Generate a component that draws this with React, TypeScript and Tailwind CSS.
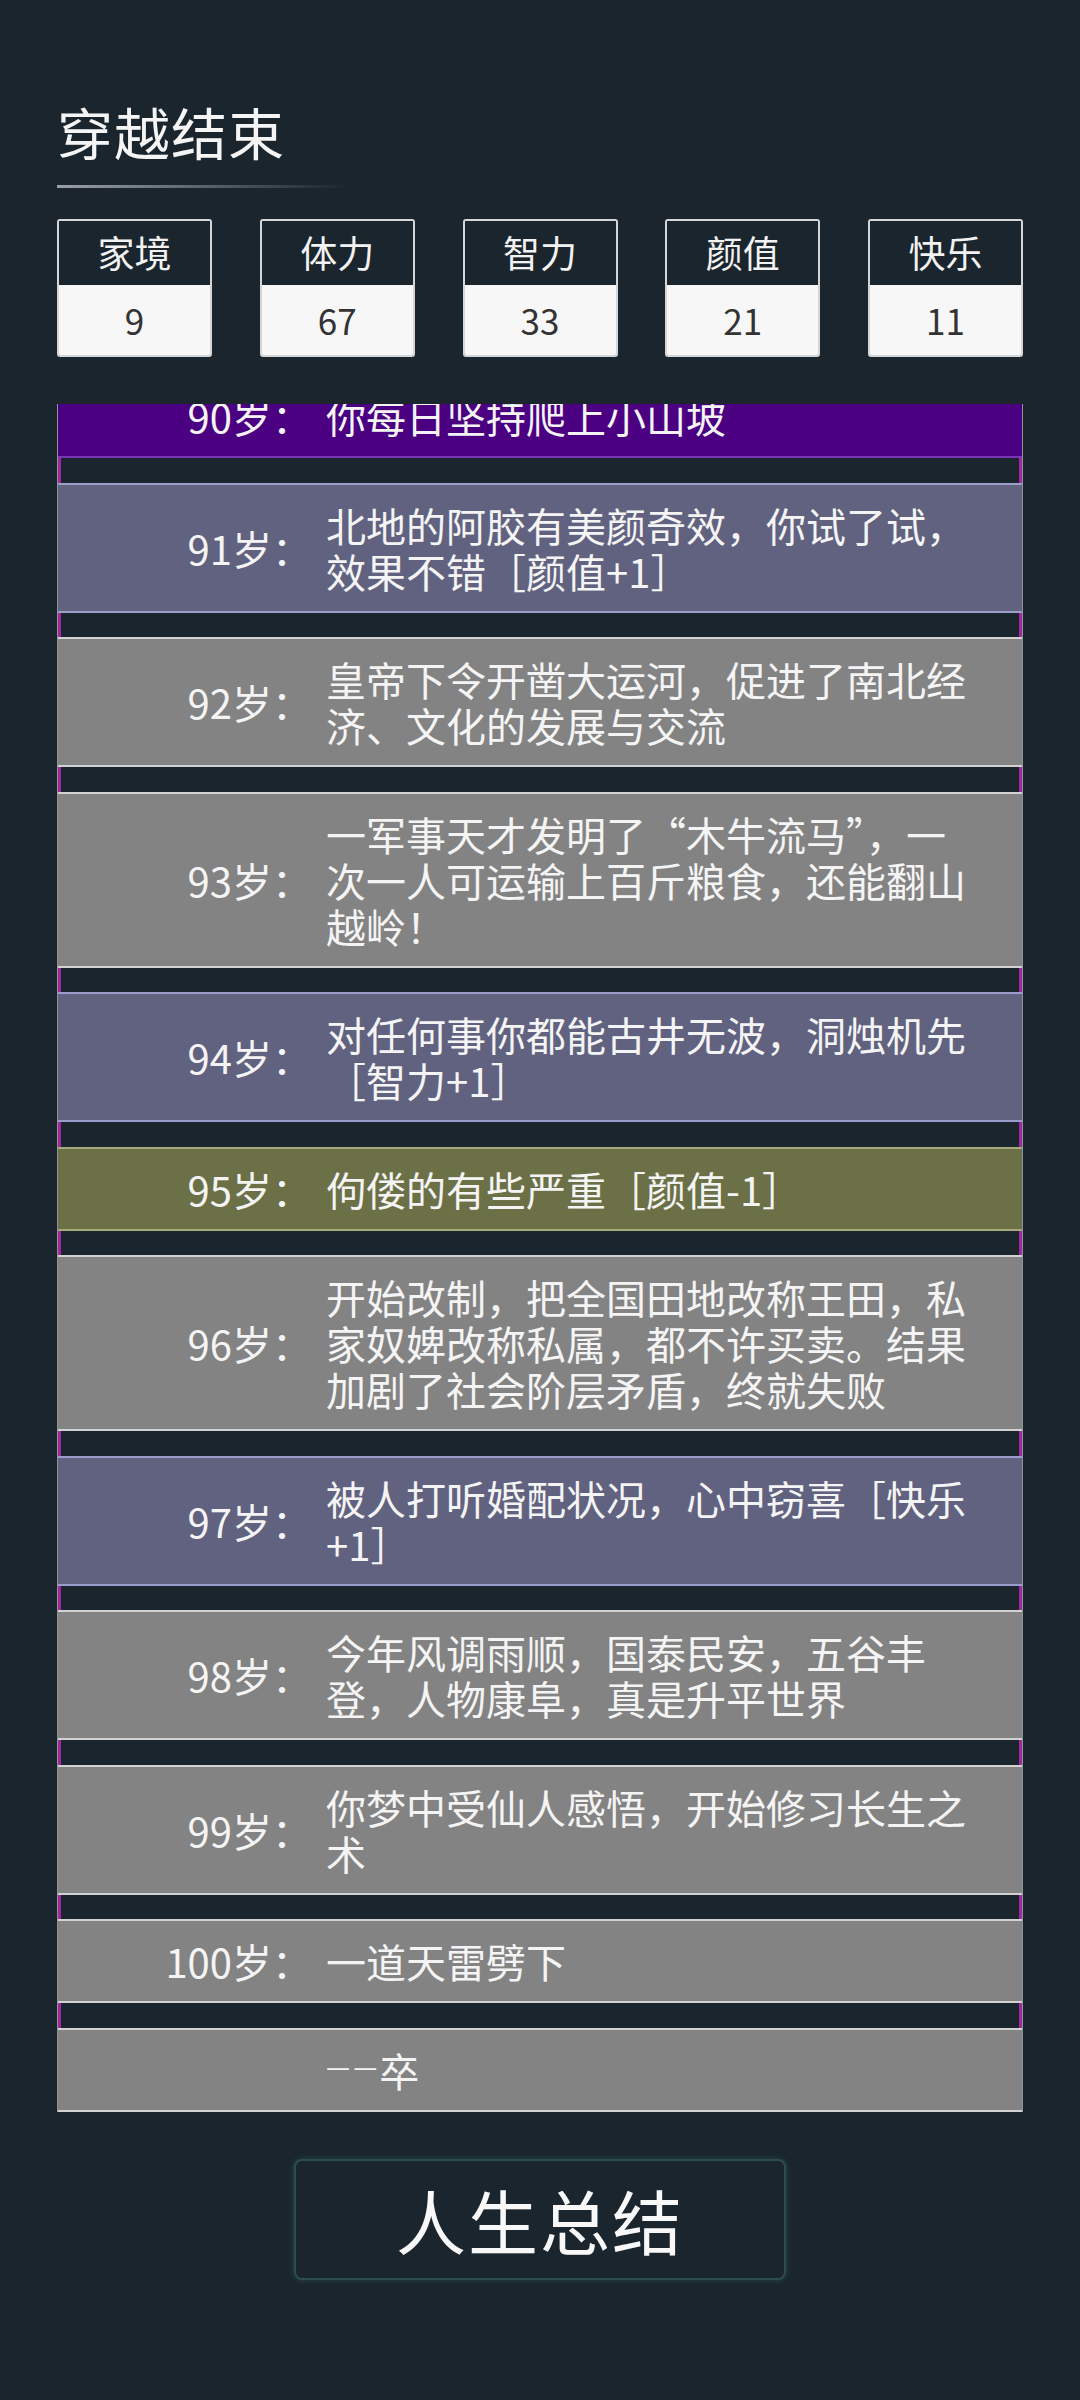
import React from 'react';

// one row of the life log; tone picks the colour of the card
type Tone = 'purple' | 'slate' | 'gray' | 'olive';

interface LogEntry {
  age: string;
  text: React.ReactNode;
  tone: Tone;
}

const stats = [
  { label: '家境', value: 9 },
  { label: '体力', value: 67 },
  { label: '智力', value: 33 },
  { label: '颜值', value: 21 },
  { label: '快乐', value: 11 },
];

const entries: LogEntry[] = [
  { age: '90岁：', text: '你每日坚持爬上小山坡', tone: 'purple' },
  { age: '91岁：', text: '北地的阿胶有美颜奇效，你试了试，效果不错［颜值+1］', tone: 'slate' },
  { age: '92岁：', text: '皇帝下令开凿大运河，促进了南北经济、文化的发展与交流', tone: 'gray' },
  { age: '93岁：', text: '一军事天才发明了“木牛流马”，一次一人可运输上百斤粮食，还能翻山越岭！', tone: 'gray' },
  { age: '94岁：', text: '对任何事你都能古井无波，洞烛机先［智力+1］', tone: 'slate' },
  { age: '95岁：', text: '佝偻的有些严重［颜值-1］', tone: 'olive' },
  { age: '96岁：', text: '开始改制，把全国田地改称王田，私家奴婢改称私属，都不许买卖。结果加剧了社会阶层矛盾，终就失败', tone: 'gray' },
  { age: '97岁：', text: '被人打听婚配状况，心中窃喜［快乐+1］', tone: 'slate' },
  { age: '98岁：', text: '今年风调雨顺，国泰民安，五谷丰登，人物康阜，真是升平世界', tone: 'gray' },
  { age: '99岁：', text: '你梦中受仙人感悟，开始修习长生之术', tone: 'gray' },
  { age: '100岁：', text: '一道天雷劈下', tone: 'gray' },
  {
    age: '',
    text: (
      <>
        <span className="inline-block text-[27px] leading-none mr-[3px] align-middle -translate-y-[10px]">—</span>
        <span className="inline-block text-[27px] leading-none mr-[2px] align-middle -translate-y-[10px]">—</span>卒
      </>
    ),
    tone: 'gray',
  },
];

const toneClasses: Record<Tone, string> = {
  purple: 'bg-[#4b0082] border-[#7b35b8]',
  slate: 'bg-[#616280] border-[#9c9dcc]',
  gray: 'bg-[#838383] border-[#d2d2d2]',
  olive: 'bg-[#6b7047] border-[#a6ab7c]',
};

function StatBox({ label, value }: { label: string; value: number }) {
  return (
    <div className="w-[155px] rounded-[3px] border-2 border-[#d6d6d6] overflow-hidden">
      <div className="h-[64px] flex items-center justify-center bg-[#1b252e] text-[37px] text-[#f2f2f2]">
        {label}
      </div>
      <div className="h-[70px] flex items-center justify-center bg-[#f7f7f7] text-[35px] text-[#333]">
        {value}
      </div>
    </div>
  );
}

function Gap() {
  return <div className="h-[24.5px] border-l-[3px] border-r-[3px] border-[#a3289f]" />;
}

function EntryRow({ entry, first }: { entry: LogEntry; first?: boolean }) {
  return (
    <div
      className={`flex items-center border-y-2 py-[17px] ${toneClasses[entry.tone]} ${first ? '-mt-[30px]' : ''}`}
    >
      <div className="w-[254px] shrink-0 text-right whitespace-nowrap text-[40px] leading-[46px] text-[#f4f4f4]">
        {entry.age}
      </div>
      <div className="ml-[14px] w-[652px] text-[40px] leading-[46px] text-[#f4f4f4]">
        {entry.text}
      </div>
    </div>
  );
}

export default function App() {
  return (
    <div
      lang="zh-CN"
      className="w-[1080px] min-h-[2400px] bg-[#1b252e] font-['Noto_Sans_CJK_SC','Noto_Sans',sans-serif] pt-[92px] pb-[120px]"
    >
      <div className="px-[57px]">
        <h1 className="text-[56px] leading-[78px] text-[#f5f5f5] tracking-[1px]">穿越结束</h1>
        <div className="mt-[15px] h-[3px] w-[290px] bg-gradient-to-r from-[#9aa0a6] via-[#5c636a] to-transparent" />

        <div className="mt-[31px] flex justify-between">
          {stats.map(s => (
            <StatBox key={s.label} label={s.label} value={s.value} />
          ))}
        </div>

        {/* scrolled log: the first card is partly hidden above the top edge */}
        <div className="mt-[47px] overflow-hidden border-x border-[#8d939a]">
          {entries.map((e, i) => (
            <React.Fragment key={e.age + i}>
              {i > 0 && <Gap />}
              <EntryRow entry={e} first={i === 0} />
            </React.Fragment>
          ))}
        </div>
      </div>

      <div className="mt-[47px] flex justify-center">
        <button className="w-[492px] h-[121px] rounded-[8px] border-2 border-[#2e4b50] shadow-[0_0_6px_rgba(60,140,130,0.35)] bg-[#1b252e] text-[70px] text-[#f8f8f8] tracking-[2px]">
          人生总结
        </button>
      </div>
    </div>
  );
}
